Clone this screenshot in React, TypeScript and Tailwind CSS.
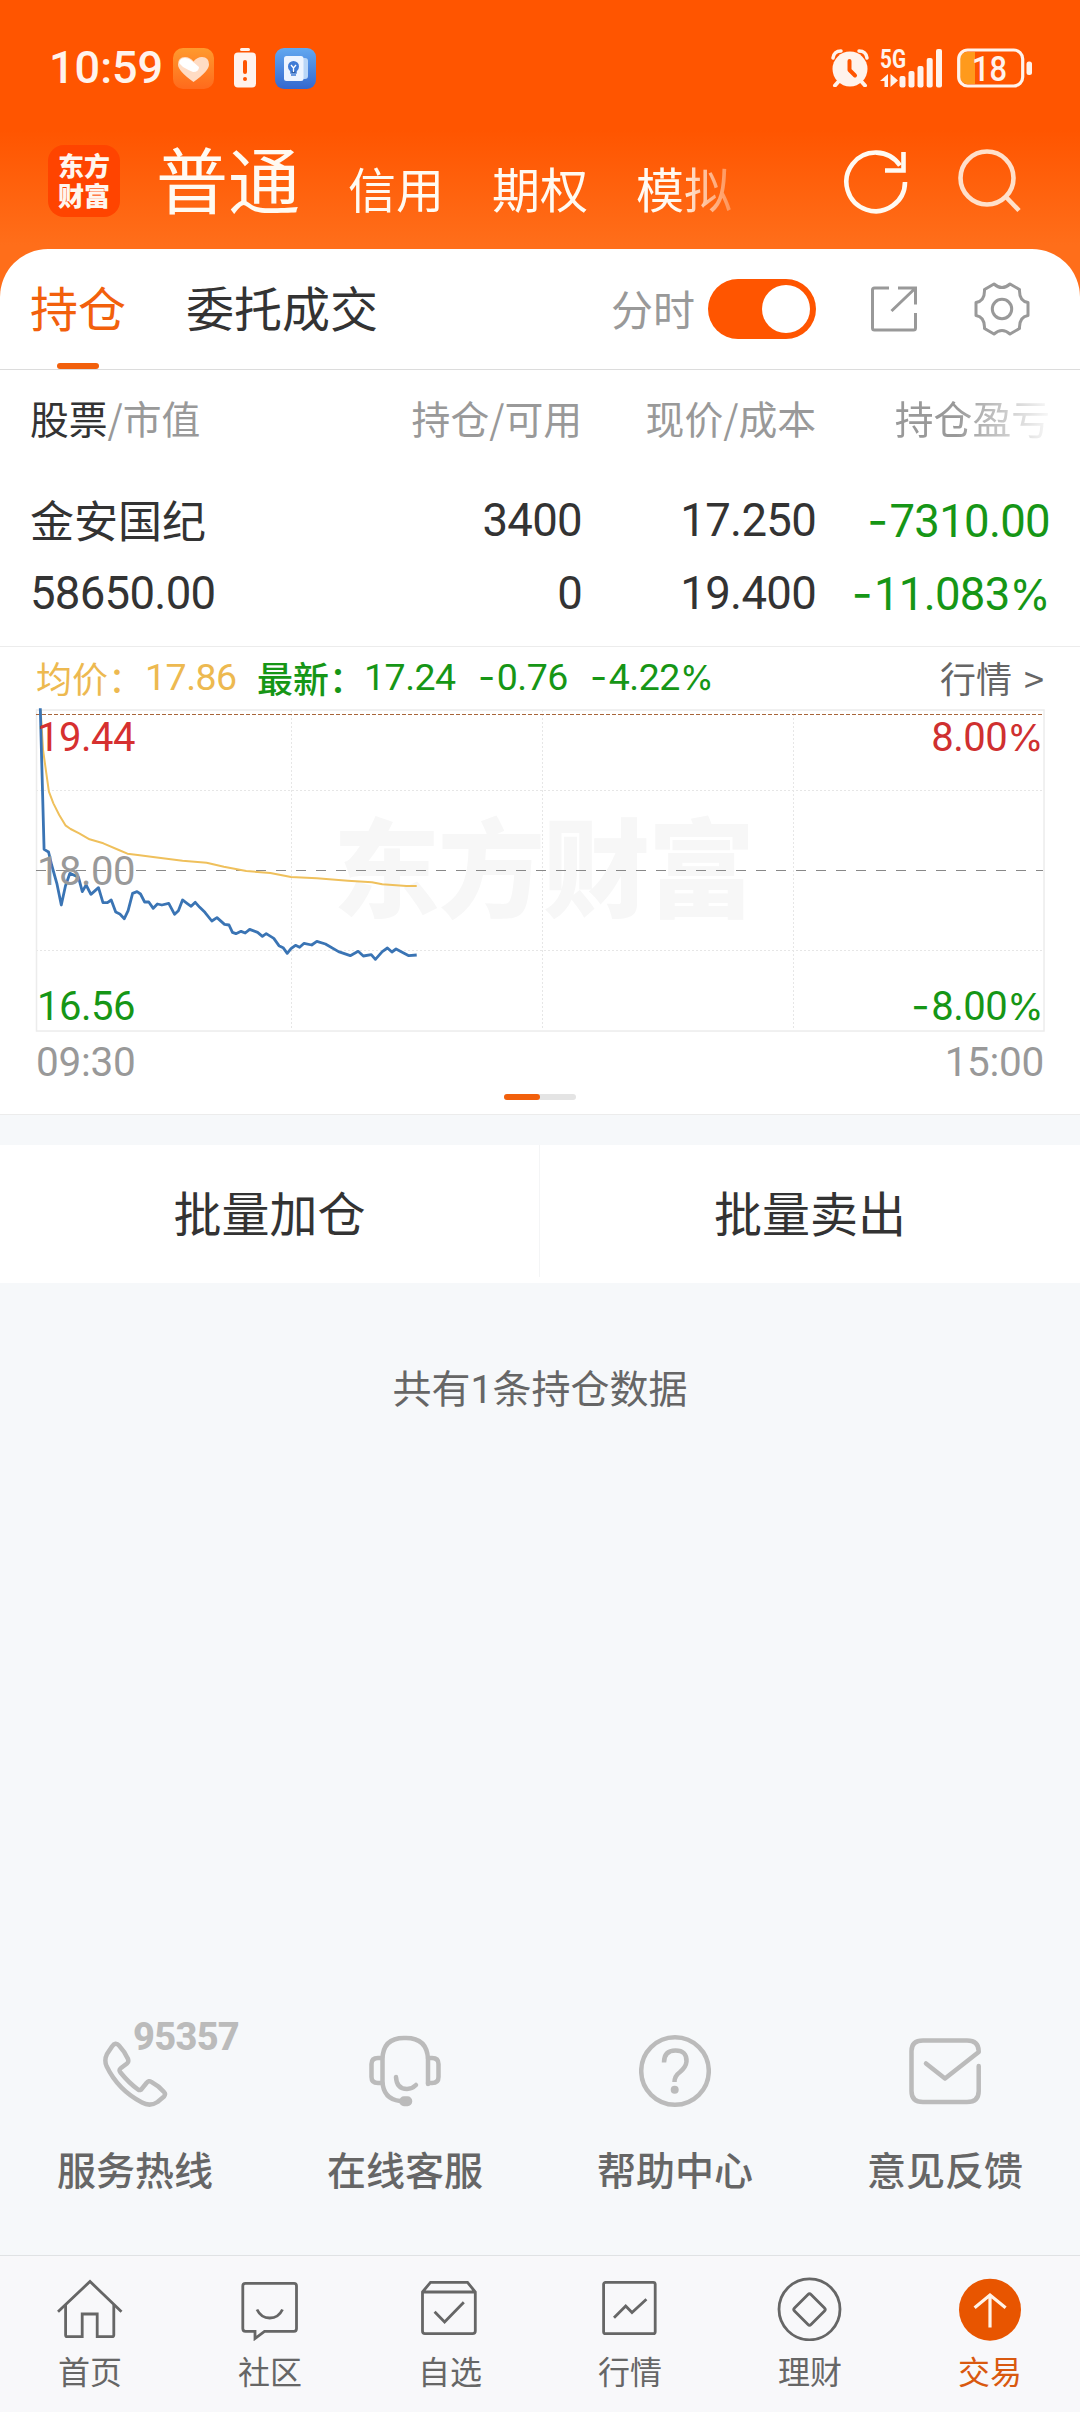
import { useState, type ReactNode } from "react";

const CJK = "'Noto Sans CJK SC', sans-serif";
const DIGITS = "Roboto, 'Noto Sans CJK SC', sans-serif";

// Chart samples, "x,y" on a 1568 x 1440 canvas
const AVG_POINTS =
  "118,210 125,330 142,455 155,490 172,525 190,556 205,567 230,580 260,598 300,610 345,630 370,641 400,645 450,652 530,662 600,668 650,680 715,693 785,699 845,711 920,715 1010,722 1080,727 1110,733 1180,738 1210,738";
const PRICE_POINTS =
  "117,205 128,628 141,636 150,675 165,730 178,795 190,738 203,700 228,712 239,755 250,735 264,763 286,743 299,788 312,788 323,780 336,816 348,822 361,836 372,812 385,760 398,755 408,762 420,786 432,786 445,805 457,792 470,795 490,790 507,823 518,812 530,780 543,790 555,799 567,787 580,802 595,817 615,843 630,833 652,853 665,855 675,877 685,881 700,874 712,879 725,868 748,877 762,889 773,881 795,895 810,917 822,923 834,940 845,926 858,916 870,922 883,910 905,915 920,904 945,912 983,935 1017,947 1040,934 1055,948 1078,944 1090,958 1110,935 1125,924 1138,936 1150,927 1187,947 1210,945";

const services: { label: string; badge?: string; icon: ReactNode }[] = [
  {
    label: "服务热线",
    badge: "95357",
    icon: (
      <path d="M13 13.5Q16.5 8.5 20 12.5Q26 19 29 26Q30 29 28 30.5L22 35Q19.5 37 21.500 39.500Q30 50 39 56.500Q41.500 58 43 55.500L47.500 50Q49.500 47 52.500 49Q60 53 65 59Q67 61 65 63.500L58.500 69Q51 74 43 69.500Q19 57 7.500 33Q5 27 8 21Z" />
    ),
  },
  {
    label: "在线客服",
    icon: (
      <>
        <path d="M59 51V26Q58 5 37 5H35Q14 5 13.500 26V48Q14 66 31 68" />
        <path d="M13 25H9Q2.500 25 2.500 31V44Q2.500 50 9 50H13" />
        <path d="M59 25H63Q69.500 25 69.500 31V44Q69.500 50 63 50H59" />
        <path d="M27 44Q27.500 56 38 56Q43 56 47 52" />
        <rect x="32.500" y="65.500" width="8.500" height="5.500" rx="2.500" fill="#bbb" />
      </>
    ),
  },
  {
    label: "帮助中心",
    icon: (
      <>
        <circle cx="36" cy="38" r="33.800" />
        <path d="M25 29.500Q25 17.500 36.500 17.500Q48 17.500 47.500 28.500Q47 34 41 39Q35.500 43 35.500 49" strokeLinecap="butt" />
        <circle cx="35.700" cy="56.800" r="4" fill="#bbb" stroke="none" />
      </>
    ),
  },
  {
    label: "意见反馈",
    icon: (
      <path d="M17 30.500L36 45.500L69.700 19V18Q69.500 7.500 58 7.500H14Q2.500 7.500 2.500 18V58Q2.500 69 14 69H58Q69.700 69 69.700 58V33" />
    ),
  },
];

const tabs: { label: string; icon: ReactNode }[] = [
  {
    label: "首页",
    icon: (
      <>
        <path d="M1 36.700L33 6.500L64.500 36.700" />
        <path d="M8.600 30V60Q8.600 61.700 10 61.700H25.200V39H40.200V61.700H55Q56.800 61.700 56.800 60V30" />
      </>
    ),
  },
  {
    label: "社区",
    icon: (
      <>
        <path d="M8.500 8.300H57Q59.500 8.300 59.500 11V53.500Q59.500 56.300 57 56.300H27.500L18 63.500V56.300H8.500Q5.800 56.300 5.800 53.500V11Q5.800 8.300 8.500 8.300Z" />
        <path d="M20 34.500Q24 43 32.700 43Q41.500 43 45.500 34.500" />
      </>
    ),
  },
  {
    label: "自选",
    icon: (
      <>
        <path d="M5.500 17L13.500 7.300H50.500L58.300 17V56Q58.300 58.700 55.500 58.700H8Q5.500 58.700 5.500 56ZM5.500 17H58.300" />
        <path d="M17.600 36.700L27.600 47L46.800 27.300" />
      </>
    ),
  },
  {
    label: "行情",
    icon: (
      <>
        <rect x="6.600" y="7.300" width="51.600" height="51.400" rx="2" />
        <path d="M17 42.700L28.700 31L35 37.500L49.400 24.300" />
      </>
    ),
  },
  {
    label: "理财",
    icon: (
      <>
        <circle cx="32.500" cy="34.300" r="30.500" />
        <path d="M31 19.500Q32.500 18 34 19.500L47.500 33Q49 34.500 47.500 36L34 49.500Q32.500 51 31 49.500L17.500 36Q16 34.500 17.500 33Z" />
      </>
    ),
  },
  {
    label: "交易",
    icon: (
      <>
        <circle cx="33" cy="34.700" r="31" fill="#e85500" stroke="none" />
        <path d="M33 52.500V20.500M17.600 32.700L33 20L48.600 32.700" stroke="#fff3e8" strokeWidth="3.200" />
      </>
    ),
  },
];

// Number whose minus and percent signs use the wider Inter glyphs
function Num({ value }: { value: string }) {
  const negative = value.startsWith("-");
  const percent = value.endsWith("%");
  return (
    <span className="whitespace-nowrap">
      {negative && <span className="mr-[2px] font-['Inter']">-</span>}
      {value.replace(/[-%]/g, "")}
      {percent && <span className="font-['Inter'] text-[0.92em]">%</span>}
    </span>
  );
}

function StatusBar() {
  return (
    <div className="flex h-[136px] items-center pl-[49px] pr-[47px] text-white">
      <span className="w-[124px] font-[Roboto] text-[45px] font-medium tracking-[0px] text-[#fff3ec]">10:59</span>
      <svg width="41" height="41" viewBox="0 0 41 41">
        <defs>
          <linearGradient id="heartBg" x1="0" y1="0" x2="0" y2="1">
            <stop offset="0" stopColor="#ff9a2e" />
            <stop offset="1" stopColor="#ff6a1c" />
          </linearGradient>
        </defs>
        <rect width="41" height="41" rx="10" fill="url(#heartBg)" />
        <path d="M20.500 34Q5 23 5 16.500Q5 9 12 9Q17 9 20.500 13.500Q24 9 29 9Q36 9 36 16.500Q36 23 20.500 34Z" fill="#ffdcc4" />
        <path d="M6 15Q7 10 12 10Q16 10 19 13L26 19Q26 24 20 24Q15 22 10 19Z" fill="#fff" />
      </svg>
      <svg className="ml-5" width="22" height="40" viewBox="0 0 22 40">
        <rect x="6" y="0" width="10" height="3" rx="1.500" fill="#fff3ec" />
        <rect x="0" y="4.500" width="22" height="35" rx="4" fill="#fff3ec" />
        <path d="M11 14V24" stroke="#ff5500" strokeWidth="4" strokeLinecap="round" />
        <circle cx="11" cy="31" r="2" fill="#ff5500" />
      </svg>
      <svg className="ml-[19px]" width="41" height="41" viewBox="0 0 41 41">
        <defs>
          <linearGradient id="bookBg" x1="0" y1="0" x2="0" y2="1">
            <stop offset="0" stopColor="#62a8f0" />
            <stop offset="1" stopColor="#3468cf" />
          </linearGradient>
        </defs>
        <rect width="41" height="41" rx="9" fill="url(#bookBg)" />
        <rect x="26" y="10" width="7" height="21" rx="3" fill="#b9d6f8" />
        <rect x="9" y="8" width="19.500" height="25" rx="2.500" fill="#edf4ff" />
        <circle cx="18.500" cy="18.500" r="5.500" fill="#3f7bd6" />
        <path d="M16 23H21V25H16ZM16 27H21" stroke="#3f7bd6" strokeWidth="1.500" />
        <path d="M16 17L18.500 20L21 17M18.500 20V24" stroke="#fff" strokeWidth="1.300" fill="none" />
      </svg>
      <svg className="ml-auto" width="38" height="38" viewBox="0 0 38 38">
        <circle cx="19" cy="20" r="17.500" fill="#fff3ec" />
        <path d="M2 9Q3 2 10 2M28 2Q35 2 36 9" stroke="#fff3ec" strokeWidth="3.500" fill="none" strokeLinecap="round" />
        <path d="M8 32L4 36.500M30 32L34 36.500" stroke="#fff3ec" strokeWidth="4" strokeLinecap="round" />
        <path d="M18.500 12V21L24 26.500" stroke="#ff5500" strokeWidth="4" fill="none" strokeLinecap="round" strokeLinejoin="round" />
      </svg>
      <svg className="ml-[11px] overflow-visible" width="64" height="40" viewBox="0 0 64 40">
        <text x="0" y="19.500" fontSize="25" fontWeight="700" fill="#fff3ec" textLength="26" lengthAdjust="spacingAndGlyphs" fontFamily={DIGITS}>
          5G
        </text>
        <path d="M8 26V39H4.500V33H0ZM10.500 26V39L18 32.500Z" fill="#fff3ec" />
        <rect x="19.500" y="28" width="6" height="11.500" rx="2" fill="#fff3ec" />
        <rect x="28.500" y="23" width="6" height="16.500" rx="2" fill="#fff3ec" />
        <rect x="37.500" y="18" width="6" height="21.500" rx="2" fill="#fff3ec" />
        <rect x="46.700" y="10" width="6" height="29.500" rx="2" fill="#fff3ec" />
        <rect x="56" y="1" width="6" height="38.500" rx="2" fill="#fff3ec" />
      </svg>
      <svg className="ml-[13px]" width="76" height="40" viewBox="0 0 76 40">
        <path d="M18 4V36H9Q3 34 3 28V12Q3 5 9 4Z" fill="#ff9a1c" />
        <rect x="1.700" y="2" width="64" height="36" rx="9" fill="none" stroke="#fff3ec" strokeWidth="3.200" />
        <rect x="69.500" y="13.500" width="5.500" height="13.500" rx="2.500" fill="#fff3ec" />
        <text x="15" y="32.500" fontSize="35" fontWeight="500" fill="#fff3ec" textLength="35" lengthAdjust="spacingAndGlyphs" fontFamily={DIGITS}>
          18
        </text>
      </svg>
    </div>
  );
}

function TopNav() {
  return (
    <div className="flex h-[113px] pl-12 pr-[58px]">
      <div className="mt-[9px] flex h-[72px] w-[72px] flex-col items-center justify-center rounded-2xl bg-[#ff4400] pb-[2px] text-[26px] font-black leading-[30px] text-[#fff6ee]">
        <span>东方</span>
        <span>财富</span>
      </div>
      <div className="ml-[36px] flex h-[108px] w-[577px] items-baseline gap-12 whitespace-nowrap text-[48px] leading-[82px] text-[#fffaf2] [mask-image:linear-gradient(to_right,black_520px,transparent_600px)]">
        <span className="text-[72px]">普通</span>
        <span>信用</span>
        <span>期权</span>
        <span>模拟</span>
      </div>
      <svg className="ml-auto mt-[11px]" width="66" height="72" viewBox="0 0 66 72" fill="none" stroke="#fffaf2" strokeWidth="4.600">
        <path d="M62 35A29.300 29.300 0 1 1 57 18.500" />
        <path d="M60.500 5V23.500H42" />
      </svg>
      <svg className="ml-[47px] mt-3" width="66" height="72" viewBox="0 0 66 72" fill="none" stroke="#ffe0ca" strokeWidth="4.600">
        <circle cx="31" cy="30" r="26.500" />
        <path d="M50 49L63 62.500" />
      </svg>
    </div>
  );
}

function Toolbar({ chartOn, onToggle }: { chartOn: boolean; onToggle: () => void }) {
  return (
    <div className="flex h-[121px] items-center border-b-[1.500px] border-[#dcdcdc] pl-[30px] pr-[50px]">
      <div className="relative flex h-full items-center pb-[6px] text-[48px] text-[#f2600c]">
        持仓
        <span className="absolute bottom-0 left-[27px] h-[6px] w-[42px] rounded-full bg-[#f2600c]" />
      </div>
      <span className="ml-[60px] pb-[6px] text-[48px] text-[#333]">委托成交</span>
      <span className="ml-auto pb-1 text-[42px] text-[#999]">分时</span>
      <button
        onClick={onToggle}
        className={`ml-[13px] flex h-[60px] w-[108px] items-center rounded-full px-[6px] ${chartOn ? "justify-end bg-[#ff5500]" : "bg-gray-300"}`}
      >
        <span className="h-12 w-12 rounded-full bg-white" />
      </button>
      <svg className="ml-[54px]" width="48" height="48" viewBox="0 0 48 48" fill="none" stroke="#999" strokeWidth="3">
        <path d="M19 3H4.500Q2.500 3 2.500 5V43Q2.500 45 4.500 45H43.500Q45.500 45 45.500 43V28" />
        <path d="M28 3H45.500V19.500M45.500 3L21.500 26" />
      </svg>
      <svg className="ml-[56px]" width="56" height="56" viewBox="-28 -28 56 56" fill="none" stroke="#999" strokeWidth="3" strokeLinejoin="round">
        <path d="M-8 -25Q0 -18 8 -25L17.500 -19.500Q17 -8 26 -6.500V6.500Q17 8 17.500 19.500L8 25Q0 18 -8 25L-17.500 19.500Q-17 8 -26 6.500V-6.500Q-17 -8 -17.500 -19.500Z" />
        <circle r="9.700" />
      </svg>
    </div>
  );
}

function Holdings() {
  return (
    <div className="h-[277px] border-b-[1.500px] border-[#ececec] pl-[30px] pr-[31px]">
      <div className="grid h-[94px] grid-cols-[318px_234px_234px_234px] items-center text-right text-[38.800px] text-[#999]">
        <span className="text-left">
          <span className="text-[#333]">股票</span>/市值
        </span>
        <span>持仓/可用</span>
        <span>现价/成本</span>
        <span className="[mask-image:linear-gradient(to_right,black_140px,transparent_240px)]">持仓盈亏</span>
      </div>
      <div className="mt-[21px] grid grid-cols-[318px_234px_234px_234px] text-right font-[Roboto] text-[45.500px] leading-[72px] tracking-[-0.700px] text-[#333]">
        <span className="text-left font-['Noto_Sans_CJK_SC'] text-[44px] leading-[68px] tracking-normal">金安国纪</span>
        <Num value="3400" />
        <Num value="17.250" />
        <span className="text-[#169616]">
          <Num value="-7310.00" />
        </span>
        <span className="text-left">58650.00</span>
        <Num value="0" />
        <Num value="19.400" />
        <span className="text-[#169616]">
          <Num value="-11.083%" />
        </span>
      </div>
    </div>
  );
}

function TrendChart() {
  return (
    <div className="h-[468px] border-b-[1.500px] border-[#ececec]">
      <div className="flex h-[59px] items-center whitespace-pre pl-9 pr-9 pt-px text-[36px]">
        <span className="w-[109px] text-[#edb950]">均价：</span>
        <span className="w-[112px] font-[Roboto] text-[37.500px] tracking-[-0.500px] text-[#edb950]">17.86</span>
        <span className="w-[107px] font-medium text-[#169616]">最新：</span>
        <span className="w-[114px] font-[Roboto] text-[37.500px] tracking-[-0.500px] text-[#169616]">17.24</span>
        <span className="w-[112px] font-[Roboto] text-[37.500px] tracking-[-0.500px] text-[#169616]">
          <Num value="-0.76" />
        </span>
        <span className="font-[Roboto] text-[37.500px] tracking-[-0.500px] text-[#169616]">
          <Num value="-4.22%" />
        </span>
        <span className="ml-auto text-[#666] [word-spacing:4px]">行情 &gt;</span>
      </div>
      <svg className="block" width="1080" height="332" viewBox="0 706 1080 332" fontFamily={DIGITS} fontSize="40" letterSpacing="-0.500">
        <text x="333" y="909" fontSize="107" fontWeight="900" letterSpacing="-2" fill="#f7f7f7" fontFamily={CJK}>
          东方财富
        </text>
        <g stroke="#e6e6e6" strokeWidth="1" strokeDasharray="2 2">
          <path d="M36 790.500H1044M36 950.500H1044M291.500 710V1030M542.500 710V1030M793.500 710V1030" />
        </g>
        <rect x="36.500" y="710" width="1007.500" height="321" fill="none" stroke="#ececec" strokeWidth="1.500" />
        <path d="M36 714.500H1043" stroke="#a8653a" strokeWidth="1" strokeDasharray="4 2" />
        <path d="M36 870.500H1043" stroke="#888" strokeWidth="1" strokeDasharray="10 10" />
        <g transform="translate(0 640) scale(0.34439 0.33333)" fill="none" strokeLinejoin="round">
          <polyline points={AVG_POINTS} stroke="#efc05c" strokeWidth="2" vectorEffect="non-scaling-stroke" />
          <polyline points={PRICE_POINTS} stroke="#3a74b4" strokeWidth="2.800" vectorEffect="non-scaling-stroke" />
        </g>
        <text x="37" y="750.500" fill="#d63030">19.44</text>
        <text x="37" y="885" fill="#999">18.00</text>
        <text x="37" y="1019.500" fill="#169616">16.56</text>
        <text x="1043" y="750.500" fill="#cf3030" textAnchor="end">
          8.00<tspan fontFamily="Inter" fontSize="37">%</tspan>
        </text>
        <text x="1043" y="1019.500" fill="#169616" textAnchor="end">
          <tspan fontFamily="Inter">-</tspan>
          <tspan dx="2">8.00</tspan>
          <tspan fontFamily="Inter" fontSize="37">%</tspan>
        </text>
      </svg>
      <div className="flex h-[49px] items-center justify-between px-9 font-[Roboto] text-[40.500px] tracking-[-0.300px] text-[#999]">
        <span>09:30</span>
        <span>15:00</span>
      </div>
      <div className="mx-auto mt-[7px] flex h-[6px] w-[72px] rounded-full bg-[#e4e4e4]">
        <span className="w-9 rounded-full bg-[#f2600c]" />
      </div>
    </div>
  );
}

export default function App() {
  const [chartOn, setChartOn] = useState(true);
  const [active, setActive] = useState("交易");

  return (
    <div className="flex h-[2412px] w-[1080px] flex-col bg-[#f6f8fa] font-['Noto_Sans_CJK_SC',sans-serif]">
      <div className="bg-[linear-gradient(to_bottom,#ff5500_0px,#ff5500_130px,#ff6e1a_245px)]">
        <StatusBar />
        <TopNav />
        <div className="overflow-hidden rounded-t-[48px] bg-white">
          <Toolbar chartOn={chartOn} onToggle={() => setChartOn(!chartOn)} />
          <Holdings />
        </div>
      </div>
      <div className="bg-white">
        <TrendChart />
      </div>

      <div className="mt-[30px] flex h-[138px] bg-white pb-[6px] text-[48px] text-[#333]">
        <button className="w-1/2 border-r border-[#f4f5f6]">批量加仓</button>
        <button className="w-1/2">批量卖出</button>
      </div>

      <p className="mt-[75px] text-center text-[39px] leading-[56px] text-[#666]">
        共有<span className="font-[Roboto]">1</span>条持仓数据
      </p>

      <div className="mt-auto grid h-[222px] grid-cols-4">
        {services.map((s) => (
          <div key={s.label} className="relative flex flex-col items-center">
            <svg width="72" height="76" viewBox="0 0 72 76" fill="none" stroke="#bbb" strokeWidth="4.500" strokeLinecap="round" strokeLinejoin="round">
              {s.icon}
            </svg>
            {s.badge && (
              <span className="absolute -top-[16px] left-[133px] font-[Roboto] text-[38px] font-extrabold leading-[40px] tracking-[-0.700px] text-[#bbb]">
                {s.badge}
              </span>
            )}
            <span className="mt-[31px] text-[39px] font-medium leading-[56px] text-[#666]">{s.label}</span>
          </div>
        ))}
      </div>

      <nav className="grid h-[157px] grid-cols-6 border-t-[1.500px] border-[#e0e2e4] bg-[#f8f8fa] pt-[19px]">
        {tabs.map((t) => (
          <button key={t.label} onClick={() => setActive(t.label)} className="flex flex-col items-center">
            <svg width="66" height="66" viewBox="0 0 66 66" fill="none" stroke="#666" strokeWidth="2.800">
              {t.icon}
            </svg>
            <span className={`mt-[7px] text-[32px] leading-[44px] ${active === t.label ? "text-[#d9590f]" : "text-[#666]"}`}>{t.label}</span>
          </button>
        ))}
      </nav>
    </div>
  );
}
